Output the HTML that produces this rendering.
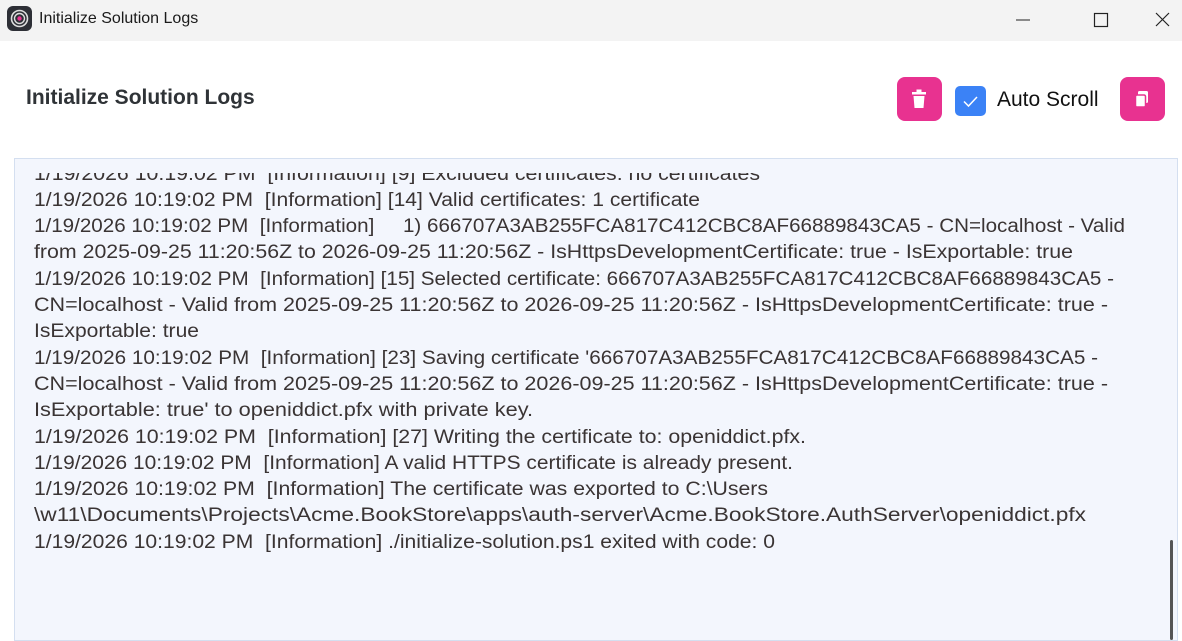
<!DOCTYPE html>
<html><head><meta charset="utf-8"><style>
body{margin:0;width:1182px;height:637px;overflow:hidden;background:#fff;font-family:"Liberation Sans",sans-serif;position:relative}
.tb{position:absolute;left:0;top:0;width:1182px;height:41px;background:#f3f3f3}
.tb .t{position:absolute;left:39px;top:10px;font-size:16px;color:#1a1a1a}
.btn{position:absolute;top:77px;width:45px;height:44px;background:#e83290;border-radius:8px}
text{white-space:pre}
</style></head><body>
<div class="tb">
<svg style="position:absolute;left:7px;top:6px" width="25" height="25" viewBox="0 0 25 25"><rect width="25" height="25" rx="6" fill="#2d2f36"/><circle cx="12.5" cy="12.5" r="8" fill="none" stroke="#ddd" stroke-width="1.6"/><circle cx="12.5" cy="12.5" r="5" fill="none" stroke="#ddd" stroke-width="1.4"/><circle cx="12.5" cy="12.5" r="2.2" fill="#e83290"/></svg>
<div class="t">Initialize Solution Logs</div>
<svg style="position:absolute;left:1010px;top:10px" width="165" height="20"><line x1="6" y1="10" x2="20" y2="10" stroke="#222" stroke-width="1"/><rect x="84.5" y="3.5" width="13" height="13" fill="none" stroke="#222" stroke-width="1.2"/><path d="M146 3 L159 16 M159 3 L146 16" stroke="#222" stroke-width="1.2"/></svg>
</div>
<div style="position:absolute;left:26px;top:86px;font-size:21px;font-weight:bold;color:#2f3337">Initialize Solution Logs</div>
<div class="btn" style="left:897px"><svg width="45" height="44"><rect x="15" y="15" width="14" height="2.5" fill="#fff"/><rect x="19.5" y="12.5" width="5" height="3" fill="#fff"/><path d="M16.5 19 H27.5 L26.5 31 H17.5 Z" fill="#fff"/></svg></div>
<div style="position:absolute;left:955px;top:86px;width:31px;height:30px;background:#3b82f6;border-radius:5px"><svg width="31" height="30"><path d="M9 15.5 L13.5 20 L22 11" fill="none" stroke="#fff" stroke-width="1.5"/></svg></div>
<div style="position:absolute;left:997px;top:88px;font-size:21px;color:#111">Auto Scroll</div>
<div class="btn" style="left:1120px"><svg width="45" height="44"><rect x="18" y="14" width="10" height="12" rx="1.5" fill="#fff"/><rect x="15.5" y="18" width="10" height="12" rx="1.5" fill="#fff" stroke="#e83290" stroke-width="1.5"/></svg></div>
<div style="position:absolute;left:14px;top:158px;width:1162px;height:481px;background:#f3f6fd;border:1px solid #d4dff0;overflow:hidden">
<div style="position:absolute;left:0;top:14px;width:1162px;height:480px;overflow:hidden">
<svg width="1164" height="480" style="position:absolute;left:-15px;top:-173px;overflow:visible" font-family="Liberation Sans, sans-serif" font-size="19" fill="#3a3434" xml:space="preserve">
<text x="34" y="180" textLength="726" lengthAdjust="spacingAndGlyphs">1/19/2026 10:19:02 PM  [Information] [9] Excluded certificates: no certificates</text>
<text x="34" y="206" textLength="666" lengthAdjust="spacingAndGlyphs">1/19/2026 10:19:02 PM  [Information] [14] Valid certificates: 1 certificate</text>
<text x="34" y="232" textLength="1091" lengthAdjust="spacingAndGlyphs">1/19/2026 10:19:02 PM  [Information]     1) 666707A3AB255FCA817C412CBC8AF66889843CA5 - CN=localhost - Valid</text>
<text x="34" y="258" textLength="1039" lengthAdjust="spacingAndGlyphs">from 2025-09-25 11:20:56Z to 2026-09-25 11:20:56Z - IsHttpsDevelopmentCertificate: true - IsExportable: true</text>
<text x="34" y="285" textLength="1080" lengthAdjust="spacingAndGlyphs">1/19/2026 10:19:02 PM  [Information] [15] Selected certificate: 666707A3AB255FCA817C412CBC8AF66889843CA5 -</text>
<text x="34" y="311" textLength="1074" lengthAdjust="spacingAndGlyphs">CN=localhost - Valid from 2025-09-25 11:20:56Z to 2026-09-25 11:20:56Z - IsHttpsDevelopmentCertificate: true -</text>
<text x="34" y="337" textLength="165" lengthAdjust="spacingAndGlyphs">IsExportable: true</text>
<text x="34" y="364" textLength="1064" lengthAdjust="spacingAndGlyphs">1/19/2026 10:19:02 PM  [Information] [23] Saving certificate '666707A3AB255FCA817C412CBC8AF66889843CA5 -</text>
<text x="34" y="390" textLength="1074" lengthAdjust="spacingAndGlyphs">CN=localhost - Valid from 2025-09-25 11:20:56Z to 2026-09-25 11:20:56Z - IsHttpsDevelopmentCertificate: true -</text>
<text x="34" y="416" textLength="499" lengthAdjust="spacingAndGlyphs">IsExportable: true' to openiddict.pfx with private key.</text>
<text x="34" y="443" textLength="772" lengthAdjust="spacingAndGlyphs">1/19/2026 10:19:02 PM  [Information] [27] Writing the certificate to: openiddict.pfx.</text>
<text x="34" y="469" textLength="759" lengthAdjust="spacingAndGlyphs">1/19/2026 10:19:02 PM  [Information] A valid HTTPS certificate is already present.</text>
<text x="34" y="495" textLength="734" lengthAdjust="spacingAndGlyphs">1/19/2026 10:19:02 PM  [Information] The certificate was exported to C:\Users</text>
<text x="34" y="521" textLength="1052" lengthAdjust="spacingAndGlyphs">\w11\Documents\Projects\Acme.BookStore\apps\auth-server\Acme.BookStore.AuthServer\openiddict.pfx</text>
<text x="34" y="548" textLength="741" lengthAdjust="spacingAndGlyphs">1/19/2026 10:19:02 PM  [Information] ./initialize-solution.ps1 exited with code: 0</text>
</svg>
</div>
<div style="position:absolute;left:1155px;top:381px;width:3px;height:100px;background:#555;border-radius:2px"></div>
</div>
</body></html>
